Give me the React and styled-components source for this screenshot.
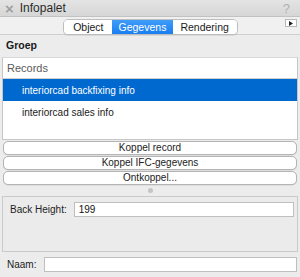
import React, { useState } from 'react';
import styled, { createGlobalStyle } from 'styled-components';

const GlobalStyle = createGlobalStyle`
	html, body {
		margin: 0;
		padding: 0;
		background: #ececec;
	}
	* {
		box-sizing: border-box;
	}
`;

const tabs = ['Object', 'Gegevens', 'Rendering'];
const records = ['interiorcad backfixing info', 'interiorcad sales info'];
const actions = ['Koppel record', 'Koppel IFC-gegevens', 'Ontkoppel...'];

function App() {
	const [activeTab, setActiveTab] = useState('Gegevens');
	const [selected, setSelected] = useState(0);

	return (
		<StyledPalette>
			<GlobalStyle />
			<StyledTitleBar>
				<StyledClose>×</StyledClose>
				<StyledTitle>Infopalet</StyledTitle>
				<StyledHelp>?</StyledHelp>
			</StyledTitleBar>

			<StyledTabStrip>
				<StyledTabs>
					{tabs.map((tab) => (
						<StyledTab
							key={tab}
							$active={tab === activeTab}
							onClick={() => setActiveTab(tab)}>
							{tab}
						</StyledTab>
					))}
				</StyledTabs>
				<StyledMenuButton>
					<svg width='4' height='5' viewBox='0 0 4 5'>
						<path d='M0 0 L4 2.5 L0 5 Z' fill='#222' />
					</svg>
				</StyledMenuButton>
			</StyledTabStrip>

			<StyledHeading>Groep</StyledHeading>

			<StyledList>
				<StyledListHeader>Records</StyledListHeader>
				{records.map((record, i) => (
					<StyledRow
						key={record}
						$selected={i === selected}
						onClick={() => setSelected(i)}>
						{record}
					</StyledRow>
				))}
			</StyledList>

			<StyledButtons>
				{actions.map((action) => (
					<StyledButton key={action}>{action}</StyledButton>
				))}
			</StyledButtons>

			<StyledSplitter>
				<StyledDot />
			</StyledSplitter>

			<StyledFieldPanel>
				<StyledField>
					<StyledLabel>Back Height:</StyledLabel>
					<StyledInput defaultValue='199' />
				</StyledField>
			</StyledFieldPanel>

			<StyledNameRow>
				<StyledLabel>Naam:</StyledLabel>
				<StyledInput defaultValue='' />
			</StyledNameRow>
		</StyledPalette>
	);
}

export default App;

const StyledPalette = styled.div`
	width: 300px;
	height: 277px;
	display: flex;
	flex-direction: column;
	background: #ececec;
	font-family: 'Liberation Sans', Arial, sans-serif;
	color: #1a1a1a;
	overflow: hidden;
`;

const StyledTitleBar = styled.div`
	height: 17px;
	display: flex;
	align-items: center;
	padding: 0 6px 0 5px;
	background: linear-gradient(#e4e4e4, #d6d6d6);
	border-bottom: 1px solid #c2c2c2;
`;

const StyledClose = styled.span`
	font-size: 15px;
	font-weight: bold;
	color: #a0a0a0;
	line-height: 1;
	margin-right: 6px;
`;

const StyledTitle = styled.span`
	font-size: 12px;
	color: #2a2a2a;
	flex: 1;
`;

const StyledHelp = styled.span`
	font-size: 13px;
	color: #b0b0b0;
	margin-right: 4px;
`;

const StyledTabStrip = styled.div`
	position: relative;
	height: 18px;
	display: flex;
	justify-content: center;
	align-items: flex-end;
	background: #f0f0f0;
	border-bottom: 1px solid #cfcfcf;
`;

const StyledTabs = styled.div`
	display: flex;
	height: 16px;
	margin-bottom: -1px;
	margin-left: 1px;
	border: 1px solid #bdbdbd;
	border-radius: 5px;
	background: #fff;
	overflow: hidden;
	box-shadow: 0 1px 0 rgba(0, 0, 0, 0.08);
`;

const StyledTab = styled.div`
	display: flex;
	align-items: center;
	justify-content: center;
	padding: 0 7px;
	font-size: 10.5px;
	cursor: default;
	color: ${(p) => (p.$active ? '#fff' : '#1a1a1a')};
	background: ${(p) => (p.$active ? 'linear-gradient(#3f9cf8, #1a7ef2)' : '#fff')};
	&:first-child {
		padding-left: 9px;
		padding-right: 8px;
	}
	&:last-child {
		padding-right: 8px;
	}
`;

const StyledMenuButton = styled.div`
	position: absolute;
	right: 3px;
	top: 2px;
	width: 12px;
	height: 8px;
	display: flex;
	align-items: center;
	justify-content: center;
	background: #fff;
	border: 1px solid #b8b8b8;
`;

const StyledHeading = styled.div`
	height: 21px;
	padding: 4px 6px 0;
	font-size: 10.5px;
	font-weight: bold;
	color: #1a1a1a;
`;

const StyledList = styled.div`
	height: 83px;
	margin: 1px 2px 0;
	background: #fff;
	border: 1px solid #c6c6c6;
	border-top-color: #d8d8d8;
`;

const StyledListHeader = styled.div`
	height: 21px;
	display: flex;
	align-items: center;
	padding-left: 4px;
	font-size: 11px;
	color: #5a5a5a;
	border-bottom: 1px solid #cfcfcf;
`;

const StyledRow = styled.div`
	height: 22px;
	display: flex;
	align-items: center;
	padding-left: 19px;
	font-size: 10px;
	color: ${(p) => (p.$selected ? '#fff' : '#1a1a1a')};
	background: ${(p) => (p.$selected ? '#0069d0' : '#fff')};
	cursor: default;
`;

const StyledButtons = styled.div`
	display: flex;
	flex-direction: column;
	gap: 1px;
	padding: 1px 3px 0;
`;

const StyledButton = styled.button`
	height: 14px;
	margin: 0;
	padding: 0;
	font-family: inherit;
	font-size: 10px;
	color: #222;
	background: #fff;
	border: 1px solid #b4b4b4;
	border-radius: 5px;
	box-shadow: 0 0.5px 0 rgba(0, 0, 0, 0.12);
	line-height: 12px;
`;

const StyledSplitter = styled.div`
	height: 11px;
	display: flex;
	align-items: center;
	justify-content: center;
`;

const StyledDot = styled.div`
	width: 5px;
	height: 5px;
	border-radius: 50%;
	background: #c4c4c4;
`;

const StyledFieldPanel = styled.div`
	height: 56px;
	margin: 0 2px;
	padding: 5px 3px 0 7px;
	background: #ebebeb;
	border: 1px solid #cacaca;
`;

const StyledField = styled.div`
	display: flex;
	align-items: center;
	gap: 7px;
`;

const StyledLabel = styled.span`
	font-size: 10px;
	color: #222;
	white-space: nowrap;
`;

const StyledInput = styled.input`
	flex: 1;
	height: 15px;
	padding: 0 4px;
	font-family: inherit;
	font-size: 10px;
	color: #111;
	background: #fff;
	border: 1px solid #bfbfbf;
	outline: none;
`;

const StyledNameRow = styled.div`
	display: flex;
	align-items: center;
	gap: 8px;
	padding: 5px 3px 0 7px;
`;
